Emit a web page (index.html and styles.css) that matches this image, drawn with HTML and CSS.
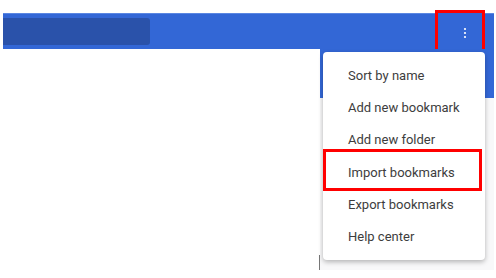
FILE: index.html
```html
<!DOCTYPE html>
<html lang="en">
<head>
  <meta charset="UTF-8" />
  <meta name="viewport" content="width=device-width, initial-scale=1.0" />
  <title>Bookmarks menu</title>
  <link rel="stylesheet" href="styles.css">
</head>
<body>
  <div class="app">
    <div class="toolbar">
      <div class="search"></div>
      <button class="more highlight">
        <svg width="4" height="12" viewBox="0 0 4 12">
          <circle cx="2" cy="2" r="1.1" fill="#fff" />
          <circle cx="2" cy="6" r="1.1" fill="#fff" />
          <circle cx="2" cy="10" r="1.1" fill="#fff" />
        </svg>
      </button>
    </div>

    <div class="content">
      <div class="caret"></div>
      <div class="panel">
        <div class="panel-head"></div>
        <div class="panel-body"></div>
      </div>
    </div>

    <ul class="menu">
      <li>Sort by name</li>
      <li>Add new bookmark</li>
      <li>Add new folder</li>
      <li class="marked">Import bookmarks</li>
      <li>Export bookmarks</li>
      <li>Help center</li>
    </ul>
  </div>
</body>
</html>
```

FILE: styles.css
```css
body {
  margin: 0;
  background: #fff;
  font-family: Roboto, "Liberation Sans", sans-serif;
}

.app {
  position: relative;
  width: 496px;
  height: 278px;
  overflow: hidden;
}

.toolbar {
  display: flex;
  align-items: center;
  justify-content: space-between;
  margin: 13px 2px 0 3px;
  height: 36px;
  background: #3367d6;
  box-shadow: inset 0 1px 0 #5b87e2;
}

.search {
  width: 147px;
  height: 27px;
  margin-top: 1px;
  background: #2a52aa;
  border-radius: 0 3px 3px 0;
}

.more {
  display: flex;
  align-items: center;
  justify-content: center;
  box-sizing: border-box;
  width: 50px;
  height: 42px;
  margin-right: 9px;
  padding: 3px 0 0 10px;
  background: #3367d6;
  border: none;
}

.highlight {
  border: 3px solid #ff0000;
}

.content {
  display: flex;
  justify-content: flex-end;
  align-items: flex-end;
  margin-right: 2px;
}

.caret {
  width: 1px;
  height: 15px;
  background: #777;
}

.panel {
  width: 174px;
  display: flex;
  flex-direction: column;
}

.panel-head {
  height: 49px;
  background: #3367d6;
}

.panel-body {
  height: 172px;
  background: #f8f8f9;
}

.menu {
  position: absolute;
  top: 52px;
  right: 11px;
  width: 162px;
  margin: 0;
  padding: 7.5px 0 6.5px;
  list-style: none;
  background: #fff;
  border-radius: 4px;
  box-shadow: 0 2px 5px rgba(0, 0, 0, 0.28);
}

.menu li {
  position: relative;
  height: 32.4px;
  line-height: 32.4px;
  padding-left: 25px;
  font-size: 13px;
  color: #3d3d3d;
}

.menu li.marked::after {
  content: "";
  position: absolute;
  top: -8px;
  left: 0;
  right: 3px;
  bottom: -2px;
  border: 3px solid #ff0000;
}
```
